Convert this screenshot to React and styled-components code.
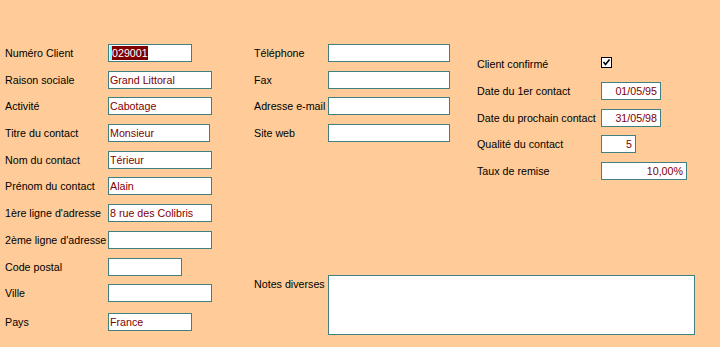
import React from 'react'
import styled, { createGlobalStyle } from 'styled-components'

const Global = createGlobalStyle`
  html, body {
    margin: 0;
    padding: 0;
    background: #ffcc99;
  }
  body {
    font-family: 'Liberation Sans', Arial, sans-serif;
    font-size: 10.7px;
    color: #000;
  }
`

const Page = styled.div`
  display: flex;
  width: 720px;
  height: 347px;
  box-sizing: border-box;
  background: #ffcc99;
`

const Column = styled.div`
  display: flex;
  flex-direction: column;
  gap: 8.7px;
  box-sizing: border-box;
  width: ${p => p.width}px;
  padding: ${p => p.top}px 0 0 ${p => p.left}px;
`

const MidColumn = styled.div`
  display: flex;
  flex-direction: column;
  justify-content: space-between;
  box-sizing: border-box;
  width: 223px;
  padding: 44px 0 12px 0;
`

const Group = styled.div`
  display: flex;
  flex-direction: column;
  gap: 8.7px;
`

const Row = styled.div`
  display: flex;
  align-items: ${p => (p.top ? 'flex-start' : 'center')};
  height: ${p => p.height || 18}px;
  margin-top: ${p => p.shift || 0}px;
`

const Label = styled.span`
  flex: none;
  width: ${p => p.width}px;
  white-space: nowrap;
  padding-top: ${p => (p.top ? 3 : 0)}px;
`

const Box = styled.div`
  flex: none;
  display: flex;
  align-items: center;
  justify-content: ${p => (p.right ? 'flex-end' : 'flex-start')};
  box-sizing: border-box;
  width: ${p => p.width}px;
  height: ${p => p.height || 18}px;
  padding: 0 ${p => (p.right ? 3 : 1)}px 0 1px;
  background: #fff;
  border: 1px solid #408080;
  color: #800000;
  white-space: nowrap;
  overflow: hidden;
`

const Caret = styled.span`
  width: 2px;
  align-self: stretch;
  margin: 1px 0;
  background: #80ffff;
`

const Selected = styled.span`
  background: #800000;
  color: #fff;
  line-height: 14px;
`

const Check = styled.div`
  box-sizing: border-box;
  width: 11px;
  height: 11px;
  margin-top: -3px;
  border: 1px solid #000;
  background: #fff;
  display: flex;
  align-items: center;
  justify-content: center;
`

const Field = ({ label, labelWidth, width, value, right, children }) => (
  <Row>
    <Label width={labelWidth}>{label}</Label>
    <Box width={width} right={right}>
      {children || value}
    </Box>
  </Row>
)

const leftFields = [
  ['Raison sociale', 104, 'Grand Littoral'],
  ['Activité', 104, 'Cabotage'],
  ['Titre du contact', 102, 'Monsieur'],
  ['Nom du contact', 104, 'Térieur'],
  ['Prénom du contact', 104, 'Alain'],
  ["1ère ligne d'adresse", 104, '8 rue des Colibris'],
  ["2ème ligne d'adresse", 104, ''],
  ['Code postal', 74, ''],
  ['Ville', 104, ''],
]

const midFields = ['Téléphone', 'Fax', 'Adresse e-mail', 'Site web']

const rightFields = [
  ['Date du 1er contact', 60, '01/05/95'],
  ['Date du prochain contact', 60, '31/05/98'],
  ['Qualité du contact', 35, '5'],
  ['Taux de remise', 86, '10,00%'],
]

export default function App() {
  return (
    <>
      <Global />
      <Page>
        <Column width={254} top={44} left={5}>
          <Field label="Numéro Client" labelWidth={103} width={84}>
            <Caret />
            <Selected>029001</Selected>
          </Field>
          {leftFields.map(([label, w, v]) => (
            <Field key={label} label={label} labelWidth={103} width={w} value={v} />
          ))}
          <Row shift={2}>
            <Label width={103}>Pays</Label>
            <Box width={84}>France</Box>
          </Row>
        </Column>

        <MidColumn>
          <Group>
            {midFields.map(label => (
              <Field key={label} label={label} labelWidth={74} width={122} />
            ))}
          </Group>
          <Row top height={60}>
            <Label width={74} top>Notes diverses</Label>
            <Box width={367} height={60} />
          </Row>
        </MidColumn>

        <Column width={243} top={55.3} left={0}>
          <Row>
            <Label width={124}>Client confirmé</Label>
            <Check>
              <svg width="9" height="9" viewBox="0 0 9 9">
                <path d="M1.5 4 L3.5 6.5 L7.5 1.5" fill="none" stroke="#000" strokeWidth="1.6" />
              </svg>
            </Check>
          </Row>
          {rightFields.map(([label, w, v]) => (
            <Field key={label} label={label} labelWidth={124} width={w} value={v} right />
          ))}
        </Column>
      </Page>
    </>
  )
}
